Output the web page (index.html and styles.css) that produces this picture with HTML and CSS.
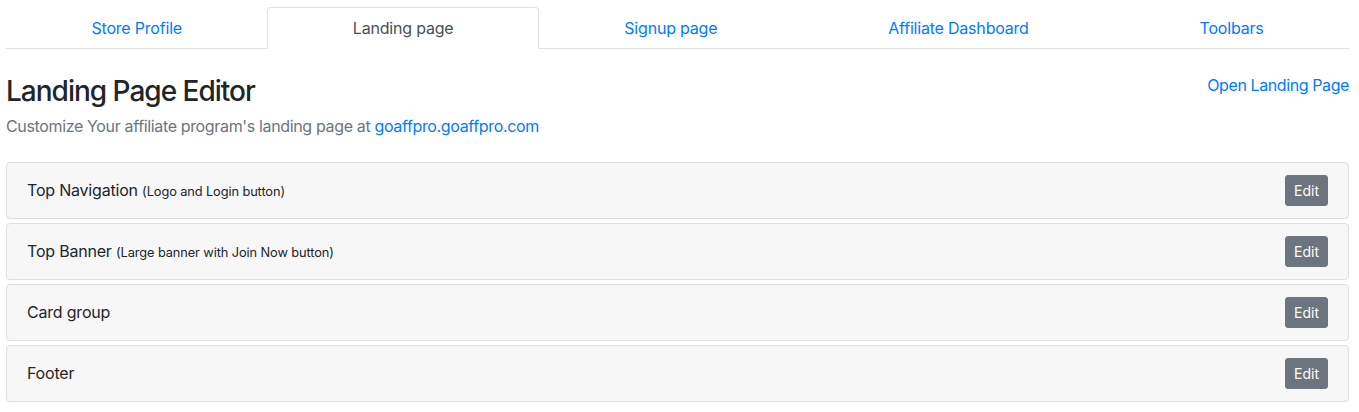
FILE: index.html
```html
<!DOCTYPE html>
<html lang="en">
<head>
<meta charset="utf-8">
<title>Landing Page Editor</title>
<link rel="stylesheet" href="styles.css">
</head>
<body>
<div class="page">
  <nav class="tabs">
    <a class="tab" href="#">Store Profile</a>
    <a class="tab active" href="#">Landing page</a>
    <a class="tab" href="#">Signup page</a>
    <a class="tab" href="#">Affiliate Dashboard</a>
    <a class="tab" href="#">Toolbars</a>
  </nav>
  <div class="head-row">
    <h3 class="title">Landing Page Editor</h3>
    <a class="link" href="#">Open Landing Page</a>
  </div>
  <p class="subtitle">Customize Your affiliate program's landing page at <a class="link" href="#">goaffpro.goaffpro.com</a></p>
  <div class="sections">
    <div class="section">
      <div class="section-name">Top Navigation <small>(Logo and Login button)</small></div>
      <button class="btn-edit">Edit</button>
    </div>
    <div class="section">
      <div class="section-name">Top Banner <small>(Large banner with Join Now button)</small></div>
      <button class="btn-edit">Edit</button>
    </div>
    <div class="section">
      <div class="section-name">Card group</div>
      <button class="btn-edit">Edit</button>
    </div>
    <div class="section">
      <div class="section-name">Footer</div>
      <button class="btn-edit">Edit</button>
    </div>
  </div>
</div>
</body>
</html>
```
FILE: styles.css
```css
* { box-sizing: border-box; }
html, body { margin: 0; padding: 0; background: #fff; }
body {
  font-family: Inter, "Liberation Sans", sans-serif;
  font-size: 16px;
  line-height: 1.5;
  color: #212529;
}
.page { padding: 7px 10px 0 6px; }
.tabs {
  display: flex;
  border-bottom: 1px solid #dee2e6;
}
.tab {
  flex: 1 1 auto;
  text-align: center;
  padding: 8px 16px;
  border: 1px solid transparent;
  border-top-left-radius: 4px;
  border-top-right-radius: 4px;
  margin-bottom: -1px;
  color: #007bff;
  text-decoration: none;
  letter-spacing: -0.2px;
}
.tab.active {
  color: #495057;
  background: #fff;
  border-color: #dee2e6 #dee2e6 #fff;
}
.head-row {
  display: flex;
  justify-content: space-between;
  align-items: flex-start;
  margin-top: 26px;
}
.head-row .link { margin-top: -2px; }
.title {
  margin: 0 0 5px;
  font-size: 28px;
  font-weight: 500;
  line-height: 1.2;
  letter-spacing: -1px;
}
.link { color: #007bff; text-decoration: none; letter-spacing: -0.4px; }
.subtitle {
  margin: 0 0 24px;
  color: #6c757d;
  letter-spacing: -0.35px;
}
.subtitle .link { letter-spacing: -0.35px; }
.sections { display: flex; flex-direction: column; gap: 4px; }
.section {
  display: flex;
  align-items: center;
  justify-content: space-between;
  padding: 12px 20px;
  background: #f7f7f7;
  border: 1px solid #dfdfdf;
  border-radius: 4px;
}
.section-name { letter-spacing: -0.2px; }
.section-name small { font-size: 12.8px; letter-spacing: -0.1px; }
.btn-edit {
  font-family: inherit;
  font-size: 14px;
  line-height: 1.5;
  padding: 4px 8px;
  color: #fff;
  background: #6c757d;
  border: 1px solid #6c757d;
  border-radius: 3px;
}
```
